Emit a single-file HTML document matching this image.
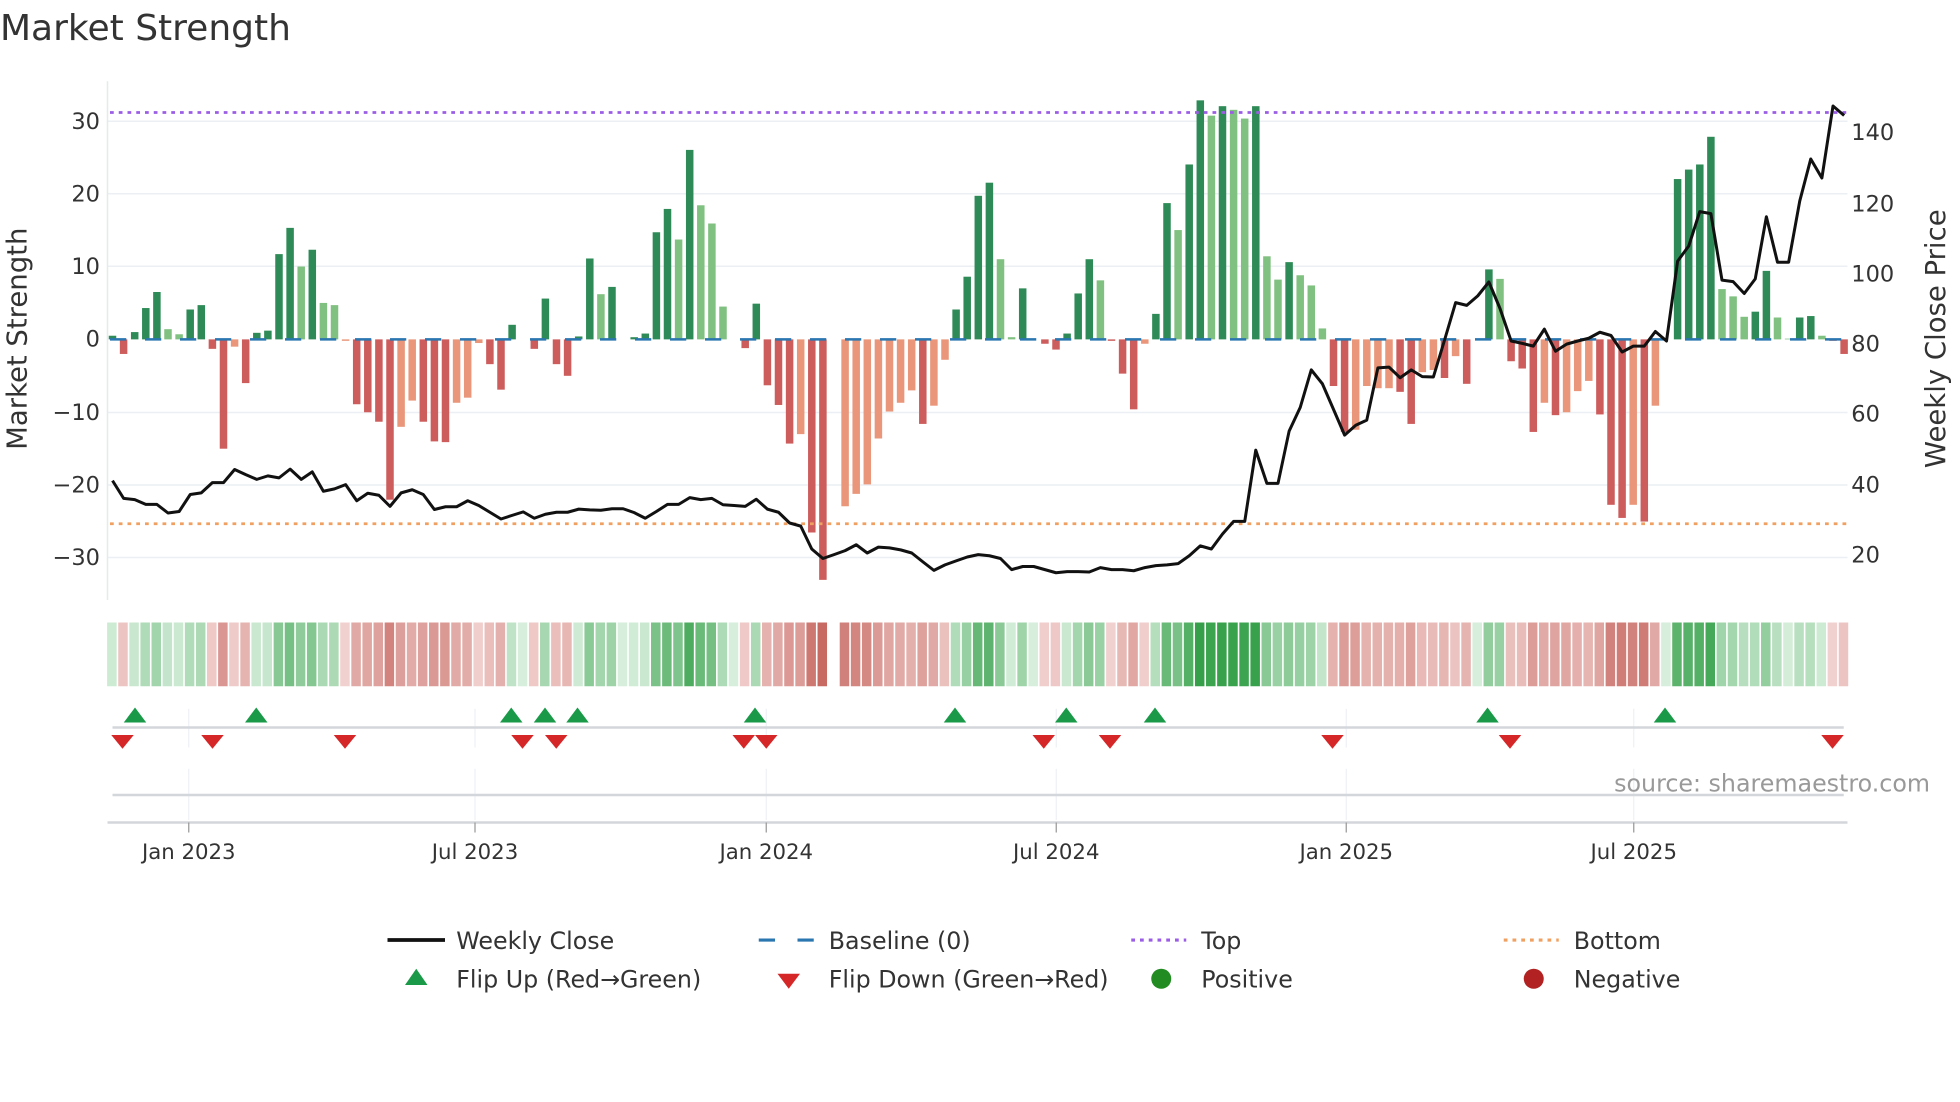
<!DOCTYPE html>
<html><head><meta charset="utf-8"><style>
html,body{margin:0;padding:0;background:#fff;}
svg{display:block;font-family:"DejaVu Sans","Liberation Sans",sans-serif;}
</style></head><body>
<svg id="s" width="1960" height="1102" viewBox="0 0 1568 881.6" xmlns="http://www.w3.org/2000/svg">
<text x="0" y="32" font-size="28.8" fill="#333">Market Strength</text>
<g id="grid" stroke="#eceff3" stroke-width="1.2">
<line x1="86" x2="1478" y1="97" y2="97"/><line x1="86" x2="1478" y1="155" y2="155"/><line x1="86" x2="1478" y1="213" y2="213"/>
<line x1="86" x2="1478" y1="330" y2="330"/><line x1="86" x2="1478" y1="388" y2="388"/><line x1="86" x2="1478" y1="446" y2="446"/>
</g>
<line x1="86" x2="86" y1="65" y2="480" stroke="#e6e9ee" stroke-width="1.2"/>
<g font-size="18" fill="#333" text-anchor="end">
<text x="80" y="103">30</text><text x="80" y="161">20</text><text x="80" y="219">10</text><text x="80" y="277">0</text>
<text x="80" y="336">−10</text><text x="80" y="394">−20</text><text x="80" y="452">−30</text>
</g>
<g font-size="18" fill="#333">
<text x="1481" y="112">140</text><text x="1481" y="169">120</text><text x="1481" y="225">100</text><text x="1481" y="281">80</text>
<text x="1481" y="337">60</text><text x="1481" y="394">40</text><text x="1481" y="450">20</text>
</g>
<text transform="translate(21,271) rotate(-90)" font-size="22" fill="#333" text-anchor="middle">Market Strength</text>
<text transform="translate(1556,271) rotate(-90)" font-size="22" fill="#333" text-anchor="middle">Weekly Close Price</text>
<g id="bars"></g>
<line x1="88" x2="1478" y1="271.5" y2="271.5" stroke="#2a76b0" stroke-width="2" stroke-dasharray="13,15"/>
<line x1="88" x2="1478" y1="90" y2="90" stroke="#9b5de5" stroke-width="2.2" stroke-dasharray="3,4"/>
<line x1="88" x2="1478" y1="419" y2="419" stroke="#f0a060" stroke-width="2.2" stroke-dasharray="3,4"/>
<polyline id="price" fill="none" stroke="#111" stroke-width="2.4" stroke-linejoin="round"/>
<g id="heat"></g>
<g stroke="#eef1f4" stroke-width="1">
<line x1="151" x2="151" y1="567" y2="598"/><line x1="380" x2="380" y1="567" y2="598"/><line x1="613" x2="613" y1="567" y2="598"/><line x1="845" x2="845" y1="567" y2="598"/><line x1="1077" x2="1077" y1="567" y2="598"/><line x1="1307" x2="1307" y1="567" y2="598"/>
<line x1="151" x2="151" y1="615" y2="656"/><line x1="380" x2="380" y1="615" y2="656"/><line x1="613" x2="613" y1="615" y2="656"/><line x1="845" x2="845" y1="615" y2="656"/><line x1="1077" x2="1077" y1="615" y2="656"/><line x1="1307" x2="1307" y1="615" y2="656"/>
</g>
<line x1="90" x2="1475" y1="582" y2="582" stroke="#d3d6da" stroke-width="2"/>
<line x1="90" x2="1475" y1="636" y2="636" stroke="#d3d6da" stroke-width="2"/>
<line x1="86" x2="1478" y1="658" y2="658" stroke="#d3d6da" stroke-width="2"/>
<g stroke="#999" stroke-width="1"><line x1="151" x2="151" y1="658" y2="666"/><line x1="380" x2="380" y1="658" y2="666"/><line x1="613" x2="613" y1="658" y2="666"/><line x1="845" x2="845" y1="658" y2="666"/><line x1="1077" x2="1077" y1="658" y2="666"/><line x1="1307" x2="1307" y1="658" y2="666"/></g>
<g id="flips"></g>
<text x="1544" y="633" font-size="19" fill="#999" text-anchor="end">source: sharemaestro.com</text>
<g font-size="17" fill="#333" text-anchor="middle">
<text x="151" y="687">Jan 2023</text><text x="380" y="687">Jul 2023</text><text x="613" y="687">Jan 2024</text><text x="845" y="687">Jul 2024</text><text x="1077" y="687">Jan 2025</text><text x="1307" y="687">Jul 2025</text>
</g>
<g font-size="19" fill="#333">
<line x1="310" x2="356" y1="752" y2="752" stroke="#111" stroke-width="3"/><text x="365" y="759">Weekly Close</text>
<line x1="607" x2="651" y1="752" y2="752" stroke="#2a76b0" stroke-width="2.5" stroke-dasharray="13,18"/><text x="663" y="759">Baseline (0)</text>
<line x1="905" x2="949" y1="752" y2="752" stroke="#9b5de5" stroke-width="2.5" stroke-dasharray="3,4"/><text x="961" y="759">Top</text>
<line x1="1203" x2="1247" y1="752" y2="752" stroke="#f0a060" stroke-width="2.5" stroke-dasharray="3,4"/><text x="1259" y="759">Bottom</text>
<polygon points="333,775 324,788 342,788" fill="#1a9a48"/><text x="365" y="790">Flip Up (Red→Green)</text>
<polygon points="622,779 640,779 631,791" fill="#d62728"/><text x="663" y="790">Flip Down (Green→Red)</text>
<circle cx="929" cy="783" r="8" fill="#228b22"/><text x="961" y="790">Positive</text>
<circle cx="1227" cy="783" r="8" fill="#b22222"/><text x="1259" y="790">Negative</text>
</g>
</svg>
<script>
var V=[[.5,'D'],[-2,'R'],[1,'D'],[4.3,'D'],[6.5,'D'],[1.4,'L'],[.7,'L'],[4.1,'D'],[4.7,'D'],[-1.3,'R'],[-15,'R'],[-1,'S'],[-6,'R'],[.9,'D'],[1.2,'D'],[11.7,'D'],[15.3,'D'],[10,'L'],[12.3,'D'],[5,'L'],[4.7,'L'],[-.2,'S'],[-8.9,'R'],[-10,'R'],[-11.3,'R'],[-22,'R'],[-12,'S'],[-8.4,'S'],[-11.3,'R'],[-14,'R'],[-14.1,'R'],[-8.7,'S'],[-8,'S'],[-.5,'S'],[-3.4,'R'],[-6.9,'R'],[2,'D'],[0,'D'],[-1.3,'R'],[5.6,'D'],[-3.4,'R'],[-5,'R'],[.4,'D'],[11.1,'D'],[6.2,'L'],[7.2,'D'],[0,'D'],[.3,'D'],[.8,'D'],[14.7,'D'],[17.9,'D'],[13.7,'L'],[26,'D'],[18.4,'L'],[15.9,'L'],[4.5,'L'],[0,'D'],[-1.2,'R'],[4.9,'D'],[-6.3,'R'],[-9,'R'],[-14.3,'R'],[-13,'S'],[-26.5,'R'],[-33,'R'],[null,'X'],[-22.9,'S'],[-21.2,'S'],[-19.9,'S'],[-13.6,'S'],[-9.9,'S'],[-8.7,'S'],[-7,'S'],[-11.6,'R'],[-9.1,'S'],[-2.8,'S'],[4.1,'D'],[8.6,'D'],[19.7,'D'],[21.5,'D'],[11,'L'],[.3,'L'],[7,'D'],[0,'D'],[-.6,'R'],[-1.4,'R'],[.8,'D'],[6.3,'D'],[11,'D'],[8.1,'L'],[-.2,'R'],[-4.7,'R'],[-9.6,'R'],[-.6,'S'],[3.5,'D'],[18.7,'D'],[15,'L'],[24,'D'],[32.8,'D'],[30.7,'L'],[32,'D'],[31.5,'L'],[30.3,'L'],[32,'D'],[11.4,'L'],[8.2,'L'],[10.6,'D'],[8.8,'L'],[7.4,'L'],[1.5,'L'],[-6.4,'R'],[-12.7,'R'],[-12.4,'S'],[-6.4,'S'],[-6.7,'S'],[-6.7,'S'],[-7.2,'R'],[-11.6,'R'],[-4.5,'S'],[-4.2,'S'],[-5.3,'R'],[-2.3,'S'],[-6.1,'R'],[0,'D'],[9.6,'D'],[8.3,'L'],[-3,'R'],[-4,'R'],[-12.7,'R'],[-8.7,'S'],[-10.4,'R'],[-10,'S'],[-7.1,'S'],[-5.7,'S'],[-10.3,'R'],[-22.7,'R'],[-24.5,'R'],[-22.7,'S'],[-25,'R'],[-9.1,'S'],[0,'D'],[22,'D'],[23.3,'D'],[24,'D'],[27.8,'D'],[6.9,'L'],[5.9,'L'],[3.1,'L'],[3.8,'D'],[9.4,'D'],[3,'L'],[.1,'L'],[3,'D'],[3.2,'D'],[.5,'L'],[-.2,'R'],[-2,'R']];
var P=[1215,1260,1263,1275,1275,1297,1293,1250,1246,1220,1220,1187,1200,1212,1203,1208,1186,1212,1193,1242,1236,1225,1266,1247,1252,1280,1246,1238,1250,1288,1281,1281,1266,1278,1295,1312,1303,1294,1310,1300,1295,1295,1287,1289,1290,1286,1286,1296,1310,1293,1275,1275,1258,1263,1260,1276,1278,1280,1262,1287,1295,1322,1330,1388,1412,1402,1392,1377,1398,1383,1385,1390,1398,1420,1442,1428,1418,1408,1402,1405,1412,1440,1432,1432,1440,1448,1445,1445,1446,1435,1440,1440,1443,1435,1430,1428,1425,1405,1380,1388,1350,1318,1318,1138,1222,1222,1090,1030,935,970,1035,1100,1075,1062,930,928,955,935,952,953,860,765,772,748,713,780,862,868,875,832,888,870,862,855,840,848,890,875,875,838,862,660,622,535,540,708,712,742,705,548,663,663,508,402,450,268,292];
var C={D:'#2e8b57',L:'#80c080',R:'#cd5c5c',S:'#e9967a'};
var ns='http://www.w3.org/2000/svg',sp=8.88,x0=90;
function el(t,a,p){var e=document.createElementNS(ns,t);for(var k in a)e.setAttribute(k,a[k]);document.getElementById(p).appendChild(e);}
function mix(a,b,t){var r='#';for(var i=0;i<3;i++){var v=Math.round(a[i]+(b[i]-a[i])*t);r+=('0'+v.toString(16)).slice(-2);}return r;}
V.forEach(function(v,i){var x=x0+i*sp;if(v[0]===null)return;var y=271.5-v[0]*5.83;
if(Math.abs(v[0])>0.05)el('rect',{x:x-3,y:Math.min(y,271.5),width:6,height:Math.abs(v[0]*5.83),fill:C[v[1]]},'bars');
var t=Math.min(1,Math.abs(v[0])/33),col;
if(v[0]>=0)col=mix([214,238,219],[52,160,72],Math.pow(t,.7));else col=mix([242,212,210],[200,105,98],Math.pow(t,.7));
el('rect',{x:x-4.3,y:498,width:7.6,height:51,fill:col},'heat');});
var pts=P.map(function(y,i){return (x0+i*sp).toFixed(1)+','+(y/3.16).toFixed(1);}).join(' ');
document.getElementById('price').setAttribute('points',pts);
[108,205,409,436,462,604,764,853,924,1190,1332].forEach(function(x){el('polygon',{points:(x)+',566 '+(x-9)+',578 '+(x+9)+',578',fill:'#1a9a48'},'flips');});
[98,170,276,418,445,595,613,835,888,1066,1208,1466].forEach(function(x){el('polygon',{points:(x-9)+',588 '+(x+9)+',588 '+x+',599',fill:'#d62728'},'flips');});
</script>
</body></html>
